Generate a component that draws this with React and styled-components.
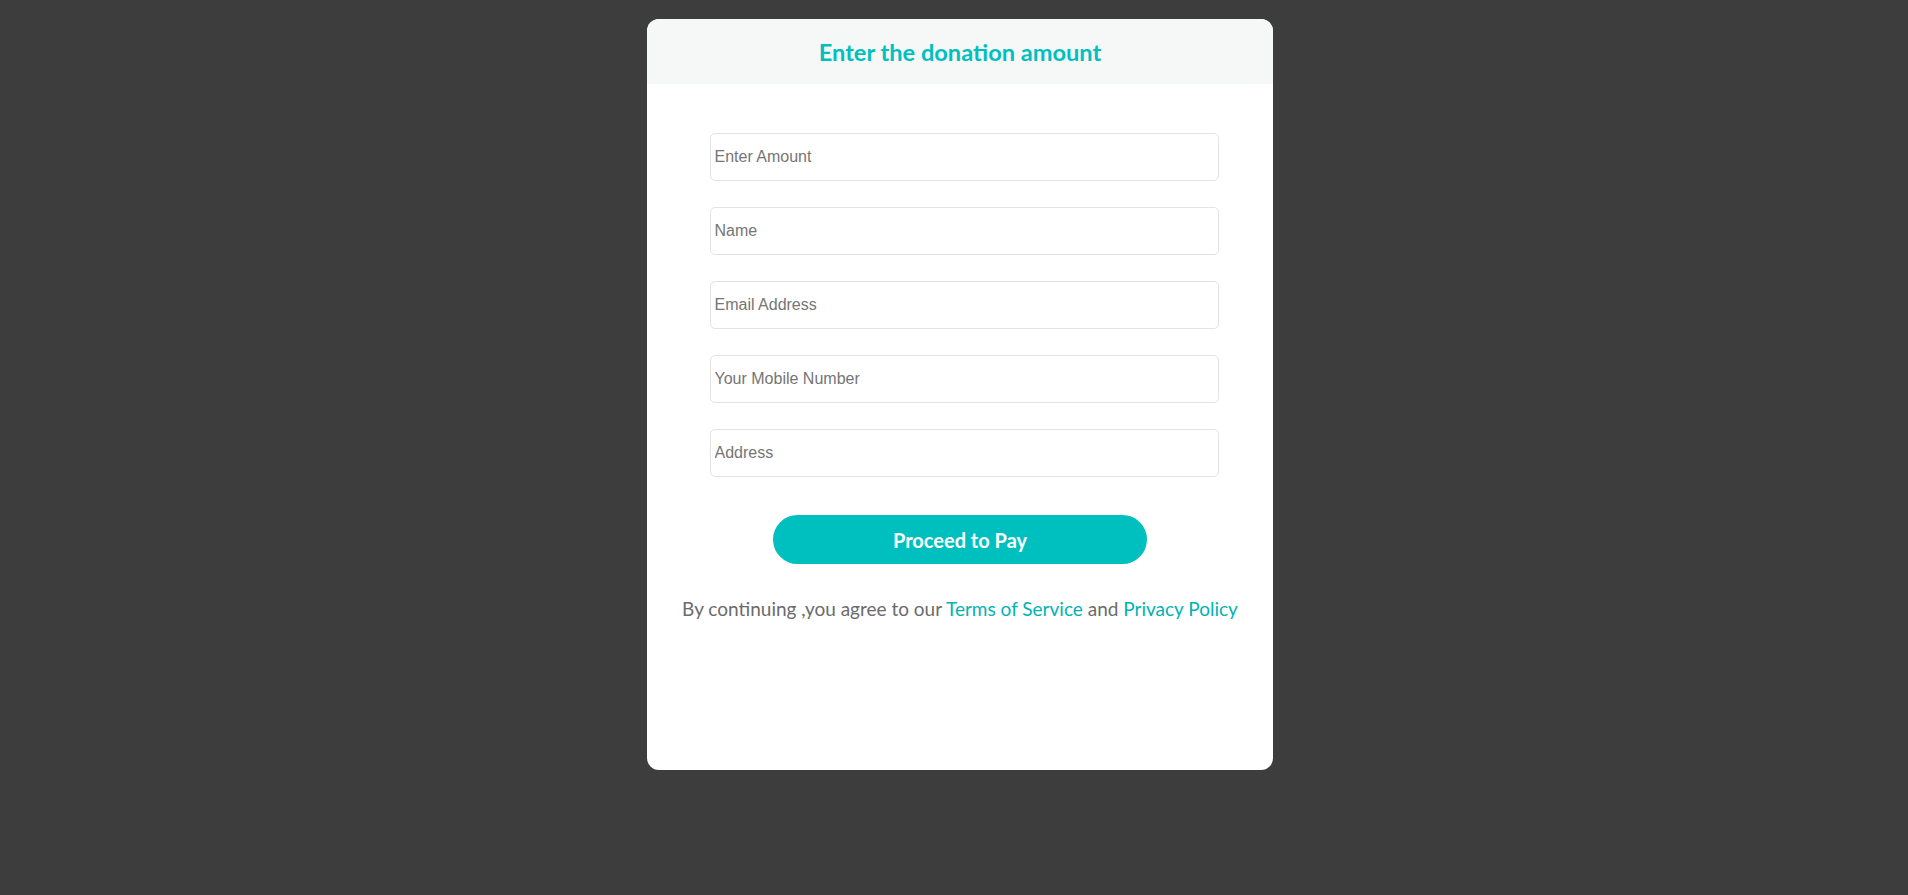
import React from 'react'
import styled, { createGlobalStyle } from 'styled-components'

const Global = createGlobalStyle`
  html, body {
    margin: 0;
    padding: 0;
    background: #3d3d3d;
  }
  * {
    box-sizing: border-box;
  }
`

const fields = ['Enter Amount', 'Name', 'Email Address', 'Your Mobile Number', 'Address']

const App = () => {
  return (
    <Page>
      <Global />
      <Card>
        <CardHeader>
          <Title>Enter the donation amount</Title>
        </CardHeader>
        <Form onSubmit={(e) => e.preventDefault()}>
          {fields.map((f) => (
            <Field key={f} type="text" placeholder={f} />
          ))}
          <PayButton type="submit">Proceed to Pay</PayButton>
          <Terms>
            By continuing ,you agree to our <Link href="#">Terms of Service</Link> and{' '}
            <Link href="#">Privacy Policy</Link>
          </Terms>
        </Form>
      </Card>
    </Page>
  )
}

const Page = styled.div`
  min-height: 895px;
  width: 100%;
  display: flex;
  justify-content: center;
  padding: 19px 0 0 12px;
`
const Card = styled.div`
  width: 626px;
  height: 751px;
  background: #ffffff;
  border-radius: 12px;
  overflow: hidden;
  display: flex;
  flex-direction: column;
`
const CardHeader = styled.div`
  height: 65px;
  background: #f6f8f7;
  display: flex;
  align-items: center;
  justify-content: center;
`
const Title = styled.h2`
  margin: 0;
  font-family: 'Source Sans Pro', Lato, 'Noto Sans', sans-serif;
  font-size: 23.6px;
  font-weight: 700;
  color: #00bfbf;
`
const Form = styled.form`
  display: flex;
  flex-direction: column;
  align-items: center;
  padding-top: 49px;
`
const Field = styled.input`
  width: 509px;
  height: 48px;
  margin: 0 0 26px 8px;
  border: 1px solid #e3e3e3;
  border-radius: 5px;
  padding: 0 4px;
  font-family: 'Liberation Sans', Arial, sans-serif;
  font-size: 16px;
  color: #333;
  outline: none;
  &::placeholder {
    color: #757575;
  }
`
const PayButton = styled.button`
  width: 374px;
  height: 49px;
  margin-top: 12px;
  border: none;
  border-radius: 25px;
  background: #00bfbf;
  color: #ffffff;
  font-family: 'Source Sans Pro', Lato, 'Noto Sans', sans-serif;
  font-size: 20px;
  font-weight: 700;
  cursor: pointer;
`
const Terms = styled.p`
  margin: 33px 0 0;
  font-family: 'Source Sans Pro', Lato, 'Noto Sans', sans-serif;
  font-size: 19px;
  color: #6b6b6b;
`
const Link = styled.a`
  color: #00b3b3;
  text-decoration: none;
`

export default App
